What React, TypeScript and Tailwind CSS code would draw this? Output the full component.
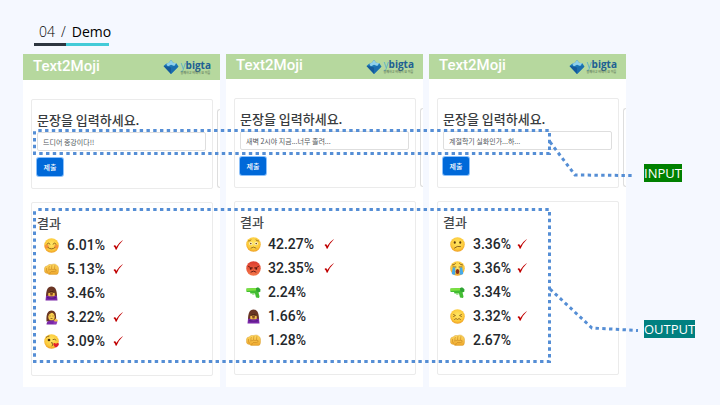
import React from "react";

type Mood =
  | "smile"
  | "fist"
  | "bow"
  | "hand"
  | "kiss"
  | "worried"
  | "angry"
  | "gun"
  | "confused"
  | "cry"
  | "confounded";

type Result = { mood: Mood; value: string; checked?: boolean };

type Demo = {
  id: string;
  sentence: string;
  headerHeight: string;
  iconPad: string;
  valueGap: string;
  checkGap: string;
  results: Result[];
};

const demos: Demo[] = [
  {
    id: "first",
    sentence: "드디어 종강이다!!",
    headerHeight: "h-[26px]",
    iconPad: "pl-[7px]",
    valueGap: "gap-2",
    checkGap: "ml-2",
    results: [
      { mood: "smile", value: "6.01%", checked: true },
      { mood: "fist", value: "5.13%", checked: true },
      { mood: "bow", value: "3.46%" },
      { mood: "hand", value: "3.22%", checked: true },
      { mood: "kiss", value: "3.09%", checked: true },
    ],
  },
  {
    id: "second",
    sentence: "새벽 2시야 지금...너무 졸려...",
    headerHeight: "h-[25px]",
    iconPad: "pl-[6px]",
    valueGap: "gap-[7px]",
    checkGap: "ml-[10px]",
    results: [
      { mood: "worried", value: "42.27%", checked: true },
      { mood: "angry", value: "32.35%", checked: true },
      { mood: "gun", value: "2.24%" },
      { mood: "bow", value: "1.66%" },
      { mood: "fist", value: "1.28%" },
    ],
  },
  {
    id: "third",
    sentence: "계절학기 실화인가...하...",
    headerHeight: "h-[25px]",
    iconPad: "pl-[7px]",
    valueGap: "gap-2",
    checkGap: "ml-[6px]",
    results: [
      { mood: "confused", value: "3.36%", checked: true },
      { mood: "cry", value: "3.36%", checked: true },
      { mood: "gun", value: "3.34%" },
      { mood: "confounded", value: "3.32%", checked: true },
      { mood: "fist", value: "2.67%" },
    ],
  },
];

const brown = "#7a5216";

function Face({ fill = "url(#face)" }: { fill?: string }) {
  return <circle cx="15" cy="15" r="14.5" fill={fill} />;
}

function Emoji({ mood }: { mood: Mood }) {
  const line = { fill: "none", stroke: brown, strokeWidth: 1.7, strokeLinecap: "round" as const };
  return (
    <svg viewBox="0 0 30 30" className="h-[15px] w-[15px] shrink-0" role="img" aria-label={mood}>
      {mood === "smile" && (
        <>
          <Face />
          <circle cx="5.5" cy="17" r="4" fill="#f5713a" opacity=".6" />
          <circle cx="24.5" cy="17" r="4" fill="#f5713a" opacity=".6" />
          <path d="M6 12q3-4 6 0M18 12q3-4 6 0M8 19q7 6 14 0" {...line} />
        </>
      )}
      {mood === "worried" && (
        <>
          <Face />
          <circle cx="9.5" cy="13" r="3.2" fill="#fff8df" />
          <circle cx="20.5" cy="13" r="3.2" fill="#fff8df" />
          <circle cx="9.5" cy="13" r="1.7" fill={brown} />
          <circle cx="20.5" cy="13" r="1.7" fill={brown} />
          <path d="M5 8q3 0 5-2M25 8q-3 0-5-2M10 22q5-4 10 0" {...line} strokeWidth={1.4} />
        </>
      )}
      {mood === "angry" && (
        <>
          <Face fill="url(#rage)" />
          <path d="M5 11q4 3 8 3M25 11q-4 3-8 3M10 22q5-4 10 0" {...line} stroke="#54140e" />
          <circle cx="9.5" cy="15.5" r="2" fill="#54140e" />
          <circle cx="20.5" cy="15.5" r="2" fill="#54140e" />
        </>
      )}
      {mood === "confused" && (
        <>
          <Face />
          <ellipse cx="9.5" cy="11" rx="2" ry="2.7" fill="#5b3a0c" />
          <ellipse cx="20.5" cy="11" rx="2" ry="2.7" fill="#5b3a0c" />
          <path d="M9 22q5-5 12-3" {...line} />
        </>
      )}
      {mood === "confounded" && (
        <>
          <Face />
          <path d="M7 11l4 2-4 2M23 11l-4 2 4 2M9 21l3-2 3 2 3-2 3 2" {...line} strokeWidth={1.4} />
        </>
      )}
      {mood === "cry" && (
        <>
          <Face />
          <path d="M5 8q4 0 6-3M25 8q-4 0-6-3M6 12h6M18 12h6" {...line} />
          <path d="M5.5 13h5v14q-5 2-7-2zM24.5 13h-5v14q5 2 7-2z" fill="#46a9e8" />
          <ellipse cx="15" cy="21" rx="3.6" ry="5" fill="#8c2f17" />
        </>
      )}
      {mood === "kiss" && (
        <>
          <Face />
          <circle cx="10" cy="12" r="2.7" fill="#4d300a" />
          <path d="M4 7q3-3 6-3M18 11q4-2 6 1M15 17q4 0 1 3 4 1 0 4" {...line} />
          <path d="M24 27c-7-4-6-9-3-9 2 0 3 2 3 2s1-2 3-2c4 0 4 5-3 9z" fill="#e3202b" />
        </>
      )}
      {mood === "fist" && (
        <>
          <path
            d="M1 12q1-4 5-4l4-3 5 0 5-1q3 0 5 2 3 1 4 6v7q0 5-4 6H10l-3-2q-5 0-6-4z"
            fill="url(#fist)"
            stroke="#d39a2c"
            strokeWidth=".8"
          />
          <path
            d="M11 8q-2 3-1 7M16 6q-1 4-1 8M22 6q-1 4-1 8M5 12q-1 5 2 9M8 16q7-2 16-1 2 3-3 4h-7M13 20l-2 4"
            fill="none"
            stroke="#c48420"
            strokeWidth="1.1"
          />
        </>
      )}
      {mood === "bow" && (
        <>
          <path d="M4 22C4 9 7 1 15 1s11 8 11 21z" fill="#6a3524" />
          <path d="M9 12q6-5 12 0l1 9H8z" fill="#f0bd4a" />
          <path d="M8 12q7-6 14 0l-1 2-6-1-6 1z" fill="#532719" />
          <path d="M12 14h6l-1 5h-4z" fill="#8a4b25" />
          <path d="M3 29l1-9q5-2 6 1h10q1-3 6-1l1 9z" fill="#7a27a8" />
          <path d="M6 22l9 2 9-2-1 3H7z" fill="#4d1678" />
        </>
      )}
      {mood === "hand" && (
        <>
          <path d="M5 23C4 9 7 1 15 1s10 8 9 20z" fill="#6a3524" />
          <ellipse cx="15" cy="13" rx="6.5" ry="8" fill="#f8cf4e" />
          <path d="M8 13c1-5 5-6 8-8 3 2 5 3 6 8l1-6-5-4h-7L7 8z" fill="#6f3a24" />
          <path d="M5 29q0-7 7-8h6q6 1 7 8z" fill="#7a27a8" />
          <path d="M11 12h2M17 12h2M13 17h4" fill="none" stroke={brown} strokeWidth="1.5" />
          <path d="M22 17l6 3-2 4-6-1z" fill="#f5bf43" />
          <path d="M19 23l8 0-2 5h-6z" fill="#8f39ba" />
        </>
      )}
      {mood === "gun" && (
        <>
          <path d="M1 7l20-1 2-1 5 3 1 5-4 2 2 8-1 3-6-1-2-8H9l-1-3H1z" fill="#43bd33" />
          <path d="M1 7l19-1v5l-19 1z" fill="#7be03f" />
          <path d="M12 16l4 0 1 4-5-1z" fill="#8fdd7c" />
          <path d="M20 6l5-1 4 4-2 5-6-1z" fill="#2fa334" />
        </>
      )}
    </svg>
  );
}

function Check() {
  return (
    <svg viewBox="0 0 20 20" className="h-[10px] w-[10px] shrink-0" role="img" aria-label="checked">
      <path d="M1 12l3-2q2 2 2.5 4Q11 6 19 0.5L19.5 1Q11 9 7 19.5H5.5Q4 14 1 12z" fill="#c00000" />
    </svg>
  );
}

function Logo() {
  return (
    <div className="flex items-center gap-[2px]">
      <svg viewBox="0 0 30 30" className="h-4 w-4" aria-hidden="true">
        <path d="M1 13l5-4 5-2 4-5 4 5 6 1 4 6-14 14z" fill="#1b77b5" />
        <path d="M6 9l5-2 4-5 4 5 6 1-4 5-6-2-6 3z" fill="#8fd0ea" />
        <path d="M1 13l8 1 6 2v12z" fill="#14599a" />
        <path d="M15 16l6-3 8 1-14 14z" fill="#1a6dae" />
      </svg>
      <div className="flex flex-col">
        <span className="font-['Open_Sans',sans-serif] text-[10px] leading-[11px] font-bold text-[#205f93]">
          <span className="font-normal text-[#59b3c9]">y</span>bigta
        </span>
        <span className="text-[3px] leading-[4px] font-medium text-[#5c7355]">함께하고 비데이 요 이를</span>
      </div>
    </div>
  );
}

function Panel({ demo }: { demo: Demo }) {
  return (
    <article className="flex min-h-[333px] flex-col bg-white pb-[11px]">
      <header className={`flex items-center justify-between bg-[#b6d89e] pr-[9px] pl-[10px] ${demo.headerHeight}`}>
        <h2 className="pb-[3px] font-[Roboto,sans-serif] text-[15px] leading-5 font-medium text-white">Text2Moji</h2>
        <Logo />
      </header>

      <div className="mt-[19px] flex pl-2">
        <form
          className="flex h-[90px] flex-1 flex-col items-start rounded-[2px] border border-[#ebebeb] pr-[6px] pl-[5px] pt-[11px]"
          onSubmit={(event) => event.preventDefault()}
        >
          <label htmlFor={demo.id} className="text-[13px] leading-[18px] font-medium text-[#383c40]">
            문장을 입력하세요.
          </label>
          <input
            id={demo.id}
            type="text"
            defaultValue={demo.sentence}
            className="mt-[3px] h-[19px] w-full rounded-[2px] border border-[#dedede] bg-white px-[5px] text-[7px] leading-[10px] text-[#53585d] outline-none"
          />
          <button
            type="submit"
            className="mt-[7px] h-[18px] w-[26px] rounded-[2px] bg-[#0069d9] text-[7px] leading-[10px] font-medium text-white ring-1 ring-[#8cc1fb]"
          >
            제출
          </button>
        </form>
        <div className="mt-[10px] ml-1 h-[79px] w-[3px] rounded-l-[3px] border-y border-l border-[#dedede]" />
      </div>

      <section className="mt-[13px] mr-[7px] ml-2 h-[174px] rounded-[2px] border border-[#ebebeb] px-[5px] pt-[11px]">
        <h3 className="text-[13px] leading-[18px] font-medium text-[#46494d]">결과</h3>
        <ul className={`mt-px ${demo.iconPad}`}>
          {demo.results.map((result) => (
            <li key={result.mood} className={`flex h-6 items-center ${demo.valueGap}`}>
              <Emoji mood={result.mood} />
              <span className="flex items-center font-[Roboto,sans-serif] text-[14px] leading-5 font-medium text-[#24282c]">
                {result.value}
                {result.checked && (
                  <span className={demo.checkGap}>
                    <Check />
                  </span>
                )}
              </span>
            </li>
          ))}
        </ul>
      </section>
    </article>
  );
}

function Annotations() {
  return (
    <svg
      viewBox="0 0 720 405"
      preserveAspectRatio="none"
      className="pointer-events-none absolute inset-0 h-full w-full"
      fill="none"
      stroke="#558ed5"
      strokeWidth="3"
      strokeDasharray="3.4 3.36"
      aria-hidden="true"
    >
      <path d="M38.3 130.5H549.5V153.5H34.5V130.5" />
      <path d="M38.3 209.5H549.5V361.5H34.5V209.5" />
      <path d="M550 142L575 175L632 175.5" />
      <path d="M550 289L592 328L638 330.5" />
    </svg>
  );
}

export default function App() {
  return (
    <main className="relative min-h-screen bg-[#f5f8ff] pt-[21px] pb-[18px] pl-[23px] font-['Noto_Sans_CJK_KR',sans-serif]">
      <svg className="absolute h-0 w-0" aria-hidden="true">
        <defs>
          <radialGradient id="face" cx=".5" cy=".4" r=".6">
            <stop offset="0" stopColor="#ffe765" />
            <stop offset=".7" stopColor="#fcca3b" />
            <stop offset="1" stopColor="#ee9e24" />
          </radialGradient>
          <linearGradient id="rage" x1="0" y1="0" x2="0" y2="1">
            <stop offset="0" stopColor="#dc3b2f" />
            <stop offset="1" stopColor="#f4784a" />
          </linearGradient>
          <linearGradient id="fist" x1="0" y1="0" x2="0" y2="1">
            <stop offset="0" stopColor="#ffdb62" />
            <stop offset="1" stopColor="#eda52b" />
          </linearGradient>
        </defs>
      </svg>

      <div className="ml-[11px] w-[75px]">
        <h1 className="flex h-[22px] items-center gap-[6px] pl-[5px] font-['Open_Sans',sans-serif] text-[14px] leading-5 whitespace-nowrap text-black">
          <span className="font-light">04</span>
          <span className="font-light">/</span>
          <span>Demo</span>
        </h1>
        <div className="flex h-[3px]">
          <div className="w-8 bg-[#2d3640]" />
          <div className="flex-1 bg-[#43cbd8]" />
        </div>
      </div>

      <div className="mt-2 flex">
        <div className="grid flex-1 grid-cols-3 gap-[6px]">
          {demos.map((demo) => (
            <Panel key={demo.id} demo={demo} />
          ))}
        </div>
        <aside className="flex w-[94px] flex-col items-start gap-[138px] pt-[110px] pl-[18px] font-['Open_Sans',sans-serif] text-[13px] leading-[18px] text-white">
          <span className="bg-[#008000]">INPUT</span>
          <span className="bg-[#008080]">OUTPUT</span>
        </aside>
      </div>

      <Annotations />
    </main>
  );
}
